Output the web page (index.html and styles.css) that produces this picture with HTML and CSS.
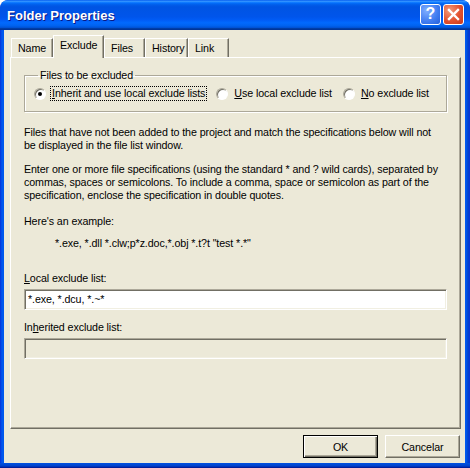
FILE: index.html
```html
<!DOCTYPE html>
<html>
<head>
<meta charset="utf-8">
<link rel="stylesheet" href="styles.css">
</head>
<body>
<div class="window">
  <div class="titlebar">
    <span class="title">Folder Properties</span>
    <div class="caption-btns">
      <span class="cbtn help">?</span>
      <span class="cbtn close"><svg width="21" height="21" viewBox="0 0 21 21"><path d="M6 6 L15 15 M15 6 L6 15" stroke="#fff" stroke-width="2.4" stroke-linecap="square" fill="none"/></svg></span>
    </div>
  </div>
  <div class="client">
    <div class="tabs">
      <div class="tab t-name">Name</div>
      <div class="tab active t-excl">Exclude</div>
      <div class="tab t-files">Files</div>
      <div class="tab t-hist">History</div>
      <div class="tab t-link">Link</div>
    </div>
    <div class="panel">
      <fieldset class="group">
        <legend>Files to be excluded</legend>
        <div class="radios">
          <label class="radio r1"><span class="dot on"></span><span class="rlabel focus"><u>I</u>nherit and use local exclude lists</span></label>
          <label class="radio r2"><span class="dot"></span><span class="rlabel"><u>U</u>se local exclude list</span></label>
          <label class="radio r3"><span class="dot"></span><span class="rlabel"><u>N</u>o exclude list</span></label>
        </div>
      </fieldset>
      <p class="txt p1">Files that have not been added to the project and match the specifications below will not<br>be displayed in the file list window.</p>
      <p class="txt p2">Enter one or more file specifications (using the standard * and ? wild cards), separated by<br>commas, spaces or semicolons. To include a comma, space or semicolon as part of the<br>specification, enclose the specification in double quotes.</p>
      <p class="txt p3">Here's an example:</p>
      <p class="txt example">*.exe, *.dll *.clw;p*z.doc,*.obj *.t?t "test *.*"</p>
      <p class="txt lbl1"><u>L</u>ocal exclude list:</p>
      <div class="field">*.exe, *.dcu, *.~*</div>
      <p class="txt lbl2">In<u>h</u>erited exclude list:</p>
      <div class="field disabled"></div>
    </div>
    <div class="buttons">
      <button class="btn default">OK</button>
      <button class="btn">Cancelar</button>
    </div>
  </div>
</div>
</body>
</html>
```

FILE: styles.css
```css
html, body {
  margin: 0;
  padding: 0;
  background: #ffffff;
}

.window {
  width: 470px;
  height: 468px;
  box-sizing: border-box;
  padding: 0 5px 5px 4px;
  border-radius: 8px 8px 0 0;
  background: linear-gradient(to right, #0831D9 0, #0058EE 2px, #0058EE 466px, #0041CC 468px, #0831D9 470px);
  display: flex;
  flex-direction: column;
  font-family: "Liberation Sans", Arial, sans-serif;
  font-size: 10.7px;
  letter-spacing: -0.1px;
  color: #000;
  position: relative;
  overflow: hidden;
}

.window::after {
  content: "";
  position: absolute;
  left: 0;
  right: 0;
  bottom: 0;
  height: 5px;
  background: linear-gradient(to bottom, #0052E0, #0041CC 3px, #00138C);
}

.titlebar {
  height: 30px;
  margin: 0 -5px 0 -4px;
  padding: 0 6px 0 7px;
  display: flex;
  align-items: center;
  justify-content: space-between;
  border-radius: 8px 8px 0 0;
  background: linear-gradient(to bottom, #0058EE 0%, #3593FF 4%, #288EFF 6%, #127DFF 8%, #036FFC 10%, #0262EE 14%, #0057E5 20%, #0054E3 24%, #0055EB 56%, #005BF5 66%, #026AFE 76%, #0062EF 86%, #0052D6 92%, #0040AB 94%, #003092 100%);
}

.title {
  color: #fff;
  font-weight: bold;
  font-size: 13px;
  letter-spacing: 0;
  text-shadow: 1px 1px 0 #0A1883;
  padding-top: 1px;
}

.caption-btns {
  display: flex;
  gap: 2px;
  padding-bottom: 2px;
}

.cbtn {
  width: 21px;
  height: 21px;
  box-sizing: border-box;
  border: 1px solid #fff;
  border-radius: 3px;
  display: flex;
  align-items: center;
  justify-content: center;
  color: #fff;
  letter-spacing: 0;
}

.cbtn svg {
  margin: -1px;
}

.help {
  background: radial-gradient(circle at 30% 30%, #7FAEFF, #3F7BF0 60%, #2560DA);
  font-weight: bold;
  font-size: 16px;
  line-height: 1;
}

.close {
  background: radial-gradient(circle at 30% 30%, #F39B7A, #E2512F 55%, #C8381A);
}

.client {
  flex: 1;
  background: #ECE9D8;
  padding: 5px 5px 0 6px;
  display: flex;
  flex-direction: column;
}

.tabs {
  height: 22px;
  display: flex;
  align-items: flex-end;
  padding-left: 1px;
  position: relative;
  z-index: 2;
}

.tab {
  height: 19px;
  box-sizing: border-box;
  border-top: 1px solid #fff;
  border-left: 1px solid #fff;
  border-right: 1px solid #716F64;
  box-shadow: inset -1px 0 #ACA899;
  padding: 3px 6px 0 6px;
  background: #ECE9D8;
  line-height: 13px;
  white-space: nowrap;
}

.t-name { width: 42px; }
.t-excl { width: 51px; }
.t-files { width: 41px; }
.t-hist { width: 43px; }
.t-link { width: 41px; }

.tab.active {
  height: 23px;
  margin-bottom: -1px;
  padding-top: 3px;
}

.panel {
  width: 451px;
  height: 372px;
  box-sizing: border-box;
  border-top: 1px solid #fff;
  border-left: 1px solid #fff;
  border-right: 1px solid #716F64;
  border-bottom: 1px solid #716F64;
  box-shadow: inset -1px -1px #ACA899;
  padding: 11px 0 0 13px;
  display: flex;
  flex-direction: column;
}

.group {
  margin: 0;
  width: 423px;
  height: 43px;
  box-sizing: border-box;
  padding: 4px 0 0 9px;
  border: 1px solid #ACA899;
  box-shadow: inset 1px 1px #fff, 1px 1px #fff;
}

.group legend {
  padding: 0 2px;
  margin-left: 4px;
  line-height: 13px;
}

.radios {
  display: flex;
  align-items: center;
  white-space: nowrap;
}

.radio {
  display: flex;
  align-items: center;
  flex: none;
}

.r2 { margin-left: 9px; }
.r3 { margin-left: 9px; }

.dot {
  width: 12px;
  height: 12px;
  flex: none;
  box-sizing: border-box;
  border-radius: 50%;
  background: #fff;
  border: 1px solid;
  border-color: #ACA899 #fff #fff #ACA899;
  box-shadow: inset 1px 1px #716F64;
  margin-right: 4px;
  display: flex;
  align-items: center;
  justify-content: center;
}

.dot.on::after {
  content: "";
  width: 4px;
  height: 4px;
  border-radius: 50%;
  background: #000;
}

.rlabel {
  line-height: 13px;
  padding: 0 1px;
  border: 1px solid transparent;
  white-space: nowrap;
}

.rlabel.focus {
  border: 1px dotted #000;
}

.txt {
  margin: 0;
  line-height: 13px;
  white-space: nowrap;
}

.p1 { margin-top: 14px; }
.p2 { margin-top: 11px; }
.p3 { margin-top: 13px; }
.example { margin-top: 9px; padding-left: 31px; }
.lbl1 { margin-top: 22px; }
.lbl2 { margin-top: 11px; }

.field {
  width: 423px;
  height: 21px;
  box-sizing: border-box;
  margin-top: 4px;
  background: #fff;
  border-top: 1px solid #ACA899;
  border-left: 1px solid #ACA899;
  border-bottom: 1px solid #fff;
  border-right: 1px solid #fff;
  box-shadow: inset 1px 1px #716F64, inset -1px -1px #F1EFE2;
  padding: 3px 0 0 3px;
  line-height: 13px;
}

.field.disabled {
  background: #ECE9D8;
  margin-top: 4px;
}

.buttons {
  display: flex;
  justify-content: flex-end;
  gap: 7px;
  padding: 6px 0 0 0;
}

.btn {
  width: 75px;
  height: 23px;
  box-sizing: border-box;
  margin: 0;
  padding: 0;
  font-family: "Liberation Sans", Arial, sans-serif;
  font-size: 10.7px;
  letter-spacing: -0.1px;
  color: #000;
  background: #ECE9D8;
  border-top: 1px solid #fff;
  border-left: 1px solid #fff;
  border-right: 1px solid #716F64;
  border-bottom: 1px solid #716F64;
  box-shadow: inset -1px -1px #ACA899;
}

.btn.default {
  border: 1px solid #000;
  box-shadow: inset 1px 1px #fff, inset -1px -1px #716F64, inset -2px -2px #ACA899;
}
```
